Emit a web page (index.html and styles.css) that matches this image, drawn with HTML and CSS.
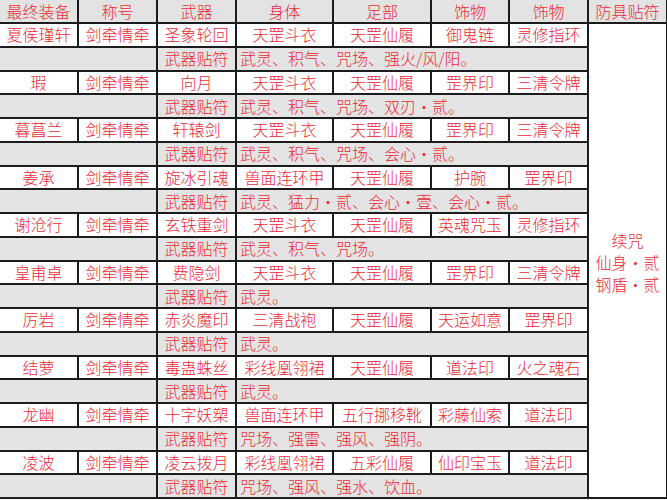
FILE: index.html
```html
<!DOCTYPE html>
<html lang="zh-CN">
<head>
<meta charset="utf-8">
<link rel="stylesheet" href="styles.css">
</head>
<body>
<table class="gear">
<colgroup>
<col class="c1"><col class="c2"><col class="c3"><col class="c4"><col class="c5"><col class="c6"><col class="c7"><col class="c8">
</colgroup>
<tr class="head"><td>最终装备</td><td>称号</td><td>武器</td><td>身体</td><td>足部</td><td>饰物</td><td>饰物</td><td class="last">防具贴符</td></tr>
<tr class="main"><td>夏侯瑾轩</td><td>剑牵情牵</td><td>圣象轮回</td><td>天罡斗衣</td><td>天罡仙履</td><td>御鬼链</td><td>灵修指环</td><td class="armor" rowspan="20"><div class="armor-text"><div class="armor-line">续咒</div><div class="armor-line">仙身・贰</div><div class="armor-line">钢盾・贰</div></div></td></tr>
<tr class="sub"><td colspan="2"></td><td>武器贴符</td><td class="note" colspan="4">武灵、积气、咒场、强火/风/阳。</td></tr>
<tr class="main"><td>瑕</td><td>剑牵情牵</td><td>向月</td><td>天罡斗衣</td><td>天罡仙履</td><td>罡界印</td><td>三清令牌</td></tr>
<tr class="sub"><td colspan="2"></td><td>武器贴符</td><td class="note" colspan="4">武灵、积气、咒场、双刃・贰。</td></tr>
<tr class="main"><td>暮菖兰</td><td>剑牵情牵</td><td>轩辕剑</td><td>天罡斗衣</td><td>天罡仙履</td><td>罡界印</td><td>三清令牌</td></tr>
<tr class="sub"><td colspan="2"></td><td>武器贴符</td><td class="note" colspan="4">武灵、积气、咒场、会心・贰。</td></tr>
<tr class="main"><td>姜承</td><td>剑牵情牵</td><td>旋冰引魂</td><td>兽面连环甲</td><td>天罡仙履</td><td>护腕</td><td>罡界印</td></tr>
<tr class="sub"><td colspan="2"></td><td>武器贴符</td><td class="note" colspan="4">武灵、猛力・贰、会心・壹、会心・贰。</td></tr>
<tr class="main"><td>谢沧行</td><td>剑牵情牵</td><td>玄铁重剑</td><td>天罡斗衣</td><td>天罡仙履</td><td>英魂咒玉</td><td>灵修指环</td></tr>
<tr class="sub"><td colspan="2"></td><td>武器贴符</td><td class="note" colspan="4">武灵、积气、咒场。</td></tr>
<tr class="main"><td>皇甫卓</td><td>剑牵情牵</td><td>费隐剑</td><td>天罡斗衣</td><td>天罡仙履</td><td>罡界印</td><td>三清令牌</td></tr>
<tr class="sub"><td colspan="2"></td><td>武器贴符</td><td class="note" colspan="4">武灵。</td></tr>
<tr class="main"><td>厉岩</td><td>剑牵情牵</td><td>赤炎魔印</td><td>三清战袍</td><td>天罡仙履</td><td>天运如意</td><td>罡界印</td></tr>
<tr class="sub"><td colspan="2"></td><td>武器贴符</td><td class="note" colspan="4">武灵。</td></tr>
<tr class="main"><td>结萝</td><td>剑牵情牵</td><td>毒蛊蛛丝</td><td>彩线凰翎裙</td><td>天罡仙履</td><td>道法印</td><td>火之魂石</td></tr>
<tr class="sub"><td colspan="2"></td><td>武器贴符</td><td class="note" colspan="4">武灵。</td></tr>
<tr class="main"><td>龙幽</td><td>剑牵情牵</td><td>十字妖槊</td><td>兽面连环甲</td><td>五行挪移靴</td><td>彩藤仙索</td><td>道法印</td></tr>
<tr class="sub"><td colspan="2"></td><td>武器贴符</td><td class="note" colspan="4">咒场、强雷、强风、强阴。</td></tr>
<tr class="main"><td>凌波</td><td>剑牵情牵</td><td>凌云拨月</td><td>彩线凰翎裙</td><td>五彩仙履</td><td>仙印宝玉</td><td>道法印</td></tr>
<tr class="sub"><td colspan="2"></td><td>武器贴符</td><td class="note" colspan="4">咒场、强风、强水、饮血。</td></tr>
</table>
</body>
</html>
```
FILE: styles.css
```css
html, body {
  margin: 0;
  padding: 0;
  background: #ffffff;
}
.gear {
  width: 667px;
  table-layout: fixed;
  border-collapse: collapse;
  font-family: "Noto Sans CJK SC", "Noto Sans", sans-serif;
  font-size: 16px;
  font-weight: 300;
  color: #ec2a36;
}
.c1 { width: 78px; }
.c2 { width: 79px; }
.c3 { width: 79px; }
.c4 { width: 97px; }
.c5 { width: 98px; }
.c6 { width: 78px; }
.c7 { width: 79px; }
.c8 { width: 79px; }
.gear td {
  border: 2px solid #1c1c1c;
  padding: 0;
  height: 21.75px;
  line-height: 21px;
  text-align: center;
  white-space: nowrap;
  overflow: hidden;
}
.gear tr td:first-child {
  border-left: none;
}
.head td {
  border-top: none;
  background: #e3e3e3;
  height: 22px;
}
.sub td {
  background: #e4e4e4;
}
.sub td.note {
  text-align: left;
  padding-left: 3px;
}
.gear td.armor {
  background: #ffffff;
  vertical-align: middle;
}
.armor-text {
  display: flex;
  flex-direction: column;
  align-items: center;
  gap: 0;
  padding-top: 2px;
}
.armor-line {
  line-height: 22px;
  height: 22px;
}
```
